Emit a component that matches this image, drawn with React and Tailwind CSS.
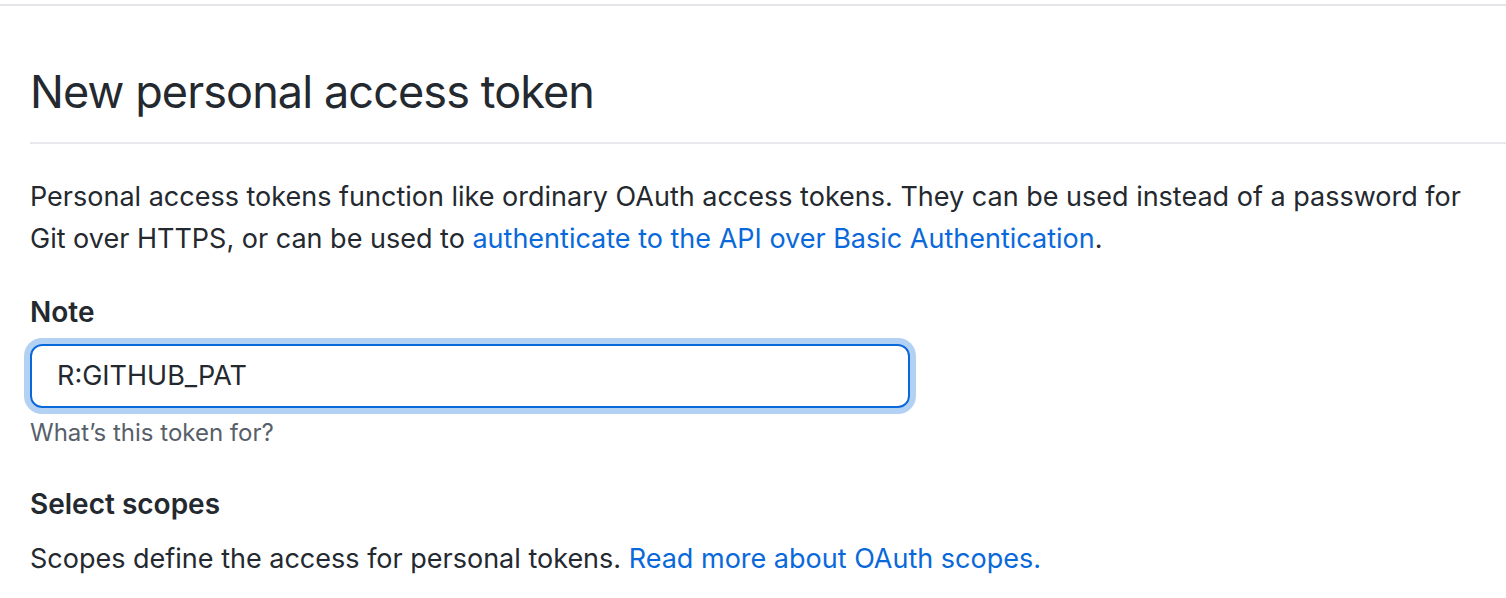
import React from "react";

function App() {
  return (
    <div className="min-h-[598px] bg-white text-[#24292f] font-['Inter','Liberation_Sans',sans-serif]">
      <div className="pt-1">
        <div className="border-t-2 border-[#e4e5e9]" />
      </div>

      <div className="pl-[30px]">
        {/* Subhead */}
        <div className="pt-[60px] pb-[24px] border-b-2 border-[#e8e9ed]">
          <h1 className="text-[45px] leading-[52px] font-normal tracking-[-0.02em]">New personal access token</h1>
        </div>

        <p className="mt-[32px] text-[27px] leading-[42px] pr-[10px]">
          Personal access tokens function like ordinary OAuth access tokens. They can be used instead of a password for
          <br />
          Git over HTTPS, or can be used to{" "}
          <a className="text-[#0969da]">authenticate to the API over Basic Authentication</a>.
        </p>

        {/* Note field */}
        <div className="mt-[34px]">
          <label className="block text-[28px] leading-[36px] font-semibold">Note</label>
          <div className="mt-[14px] w-[880px] h-[64px] rounded-[12px] border-2 border-[#0969da] ring-[6px] ring-[#b3d2f3] flex items-center px-[25px]">
            <span className="text-[27px]">R:GITHUB_PAT</span>
          </div>
          <p className="mt-[10px] text-[24px] leading-[30px] text-[#57606a]">What’s this token for?</p>
        </div>

        {/* Scopes */}
        <div className="mt-[38px]">
          <h3 className="text-[28px] leading-[36px] font-semibold">Select scopes</h3>
          <p className="mt-[19px] text-[27px] leading-[36px]">
            Scopes define the access for personal tokens.{" "}
            <a className="text-[#0969da]">Read more about OAuth scopes.</a>
          </p>
        </div>
      </div>
    </div>
  );
}

export default App;
